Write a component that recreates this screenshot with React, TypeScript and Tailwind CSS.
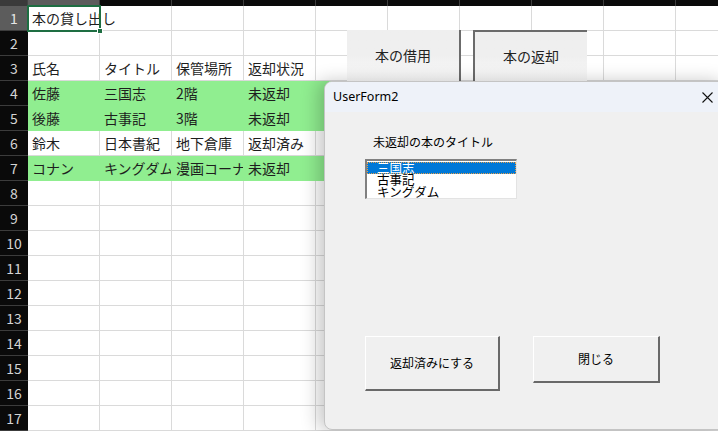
import React from "react";

const JP = { fontFamily: '"Noto Sans CJK JP", "Noto Sans", sans-serif' };

type Row = { cells: string[]; green?: boolean };

const ROWS: Row[] = [
  { cells: ["本の貸し出し"] },
  { cells: [] },
  { cells: ["氏名", "タイトル", "保管場所", "返却状況"] },
  { cells: ["佐藤", "三国志", "2階", "未返却"], green: true },
  { cells: ["後藤", "古事記", "3階", "未返却"], green: true },
  { cells: ["鈴木", "日本書紀", "地下倉庫", "返却済み"] },
  { cells: ["コナン", "キングダム", "漫画コーナー", "未返却"], green: true },
];

const COLS = 10;

function SheetRow({ index, row }: { index: number; row?: Row }) {
  const selected = index === 0;
  return (
    <div className="flex h-[25px]">
      <div
        className={`w-[28px] shrink-0 flex items-center justify-center border-b border-[#3c3c3c] text-[14px] ${
          selected ? "bg-[#5c5c5c] text-[#e6e6e6]" : "bg-[#0a0a0a] text-[#d4d4d4]"
        }`}
        style={JP}
      >
        {index + 1}
      </div>
      {Array.from({ length: COLS }).map((_, c) => {
        const text = row?.cells[c] ?? "";
        const green = row?.green && c < 5;
        return (
          <div
            key={c}
            className={`relative w-[72px] shrink-0 flex items-center pl-[4px] border-r border-b text-[14px] text-[#1e1e1e] whitespace-nowrap ${
              green ? "bg-[#90ee90] border-[#90ee90]" : "border-[#dadada]"
            } ${selected && c === 0 ? "overflow-visible z-10" : "overflow-hidden"}`}
            style={JP}
          >
            {text}
            {selected && c === 0 && (
              <>
                <div className="absolute -left-px -top-px w-[74px] h-[27px] border-2 border-[#1e6e42]" />
                <div className="absolute right-[-4px] bottom-[-4px] w-[6px] h-[6px] bg-[#1e6e42] border border-white" />
              </>
            )}
          </div>
        );
      })}
    </div>
  );
}

function SheetButton({ label, pressed }: { label: string; pressed?: boolean }) {
  return (
    <div
      className={`w-[114px] h-[51px] flex items-center justify-center text-[14px] text-[#222] bg-gradient-to-b from-[#efefef] via-[#efefef] to-[#fbfbfb] ${
        pressed
          ? "border-l-2 border-t-2 border-[#6b6b6b]"
          : "border-r-2 border-[#6b6b6b]"
      }`}
      style={JP}
    >
      {label}
    </div>
  );
}

function FormButton({ label, w, h }: { label: string; w: string; h: string }) {
  return (
    <div
      className={`${w} ${h} flex items-center justify-center bg-[#f0f0f0] border-t border-l border-t-white border-l-white border-r-2 border-b-2 border-r-[#696969] border-b-[#696969] text-[12px] text-black`}
      style={JP}
    >
      {label}
    </div>
  );
}

export default function App() {
  return (
    <div className="relative w-[718px] h-[431px] overflow-hidden bg-white">
      {/* column header strip */}
      <div className="flex h-[6px] bg-[#0a0a0a]">
        <div className="w-[28px] shrink-0 bg-[#3a3a3a] border-r border-[#444]" />
        {Array.from({ length: COLS }).map((_, c) => (
          <div
            key={c}
            className={`w-[72px] shrink-0 border-r border-[#3c3c3c] ${c === 0 ? "bg-[#5c5c5c]" : ""}`}
          />
        ))}
      </div>

      {Array.from({ length: 17 }).map((_, i) => (
        <SheetRow key={i} index={i} row={ROWS[i]} />
      ))}

      {/* shapes on the sheet */}
      <div className="absolute left-[347px] top-[30px] flex gap-[12px]">
        <SheetButton label="本の借用" />
        <SheetButton label="本の返却" pressed />
      </div>

      {/* UserForm window */}
      <div className="absolute left-[324px] top-[81px] w-[404px] h-[349px] rounded-[8px] border border-[#c4c4c4] bg-[#f0f0f0] overflow-hidden shadow-[-6px_0_18px_rgba(0,0,0,0.22)]">
        <div className="h-[30px] bg-[#eef2f9] flex items-center justify-between pl-[8px] pr-[16px]">
          <span className="text-[12.5px] text-black" style={{ fontFamily: '"Noto Sans", sans-serif' }}>
            UserForm2
          </span>
          <svg width="11" height="11" viewBox="0 0 11 11" className="mr-[-2px]">
            <path d="M0.5 0.5 L10.5 10.5 M10.5 0.5 L0.5 10.5" stroke="#111" strokeWidth="1.1" />
          </svg>
        </div>

        <div className="pl-[40px] pt-[22px]">
          <div className="pl-[8px] text-[12px] leading-[16px] text-black" style={JP}>
            未返却の本のタイトル
          </div>
          <div className="mt-[9px] w-[152px] h-[40px] bg-white border-t-2 border-l-2 border-t-[#808080] border-l-[#808080] border-r border-b border-r-[#e3e3e3] border-b-[#e3e3e3] pt-[1px]">
            {["三国志", "古事記", "キングダム"].map((t, i) => (
              <div
                key={t}
                className={`h-[12px] leading-[12px] text-[12.5px] pl-[10px] ${
                  i === 0 ? "bg-[#0078d7] text-white outline-1 outline-dotted outline-[#e8a04a] -outline-offset-1" : "text-black"
                }`}
                style={JP}
              >
                {t}
              </div>
            ))}
          </div>

          <div className="mt-[137px] flex items-start gap-[33px]">
            <FormButton label="返却済みにする" w="w-[135px]" h="h-[55px]" />
            <FormButton label="閉じる" w="w-[127px]" h="h-[47px]" />
          </div>
        </div>
      </div>
    </div>
  );
}
